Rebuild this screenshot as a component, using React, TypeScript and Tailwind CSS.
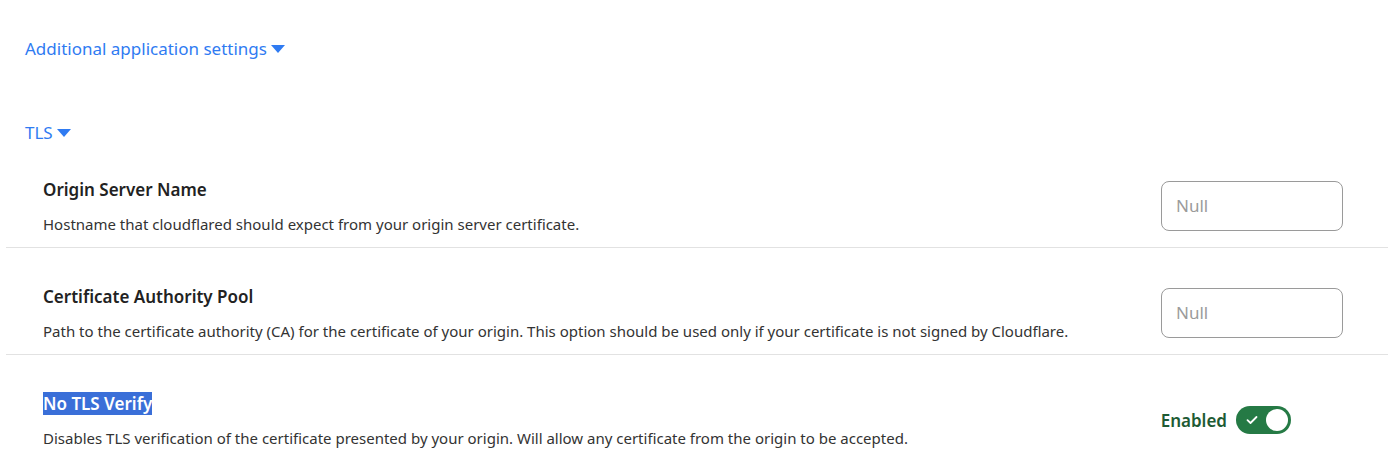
import React from 'react'

const Caret = () => (
    <svg width="14" height="8" viewBox="0 0 14 8" className="ml-1 inline-block" aria-hidden="true">
        <path d="M0 0 L14 0 L7 8 Z" fill="currentColor" />
    </svg>
)

interface RowProps {
    title: React.ReactNode;
    description: string;
    control: React.ReactNode;
    divider?: boolean;
    first?: boolean;
}

const SettingRow = ({ title, description, control, divider = true, first = false }: RowProps) => (
    <div className={`${divider ? 'border-b border-[#e2e2e2] pb-[12px]' : ''} ${first ? '' : 'pt-[37px]'}`}>
        <div className="flex items-center justify-between pl-[37px] pr-[45px]">
            <div>
                <div className="text-[17px] font-semibold text-[#222] leading-[24px]">{title}</div>
                <p className="mt-[11px] text-[15px] text-[#333] leading-[22px]">{description}</p>
            </div>
            {control}
        </div>
    </div>
)

const NullInput = () => (
    <input
        type="text"
        placeholder="Null"
        className="w-[182px] h-[50px] mb-[2px] rounded-[8px] border border-[#9a9a9a] px-[14px] text-[17px] text-[#333] placeholder-[#9b9b9b] outline-none"
    />
)

const Toggle = () => (
    <div className="flex items-center gap-[9px]">
        <span className="text-[17px] font-semibold text-[#1e5b34]">Enabled</span>
        <button type="button" className="relative flex items-center w-[55px] h-[28px] mb-[1px] rounded-full bg-[#257a45] px-[3px]">
            <svg width="12" height="10" viewBox="0 0 12 10" className="ml-[7px]" aria-hidden="true">
                <path d="M1.5 5.2 L4.5 8 L10.5 2" stroke="white" strokeWidth="1.8" fill="none" strokeLinecap="round" strokeLinejoin="round" />
            </svg>
            <span className="ml-auto w-[22px] h-[22px] rounded-full bg-white" />
        </button>
    </div>
)

export default function App() {
    return (
        <div className="w-[1400px] h-[460px] bg-white overflow-hidden" style={{ fontFamily: '"Noto Sans", "Open Sans", sans-serif' }}>
            <div className="pl-[25px] pt-[37px]">
                <button type="button" className="flex items-center text-[17px] text-[#2f7bf2] leading-[24px]">
                    Additional application settings
                    <Caret />
                </button>
            </div>
            <div className="pl-[25px] pt-[60px]">
                <button type="button" className="flex items-center text-[17px] text-[#2f7bf2] leading-[24px]">
                    TLS
                    <Caret />
                </button>
            </div>
            <div className="ml-[6px] mr-[12px] mt-[33px]">
                <SettingRow
                    first
                    title="Origin Server Name"
                    description="Hostname that cloudflared should expect from your origin server certificate."
                    control={<NullInput />}
                />
                <SettingRow
                    title="Certificate Authority Pool"
                    description="Path to the certificate authority (CA) for the certificate of your origin. This option should be used only if your certificate is not signed by Cloudflare."
                    control={<NullInput />}
                />
                <SettingRow
                    title={<span className="bg-[#3a6fd8] text-white">No TLS Verify</span>}
                    description="Disables TLS verification of the certificate presented by your origin. Will allow any certificate from the origin to be accepted."
                    control={<div className="mr-[52px]"><Toggle /></div>}
                    divider={false}
                />
            </div>
        </div>
    )
}
